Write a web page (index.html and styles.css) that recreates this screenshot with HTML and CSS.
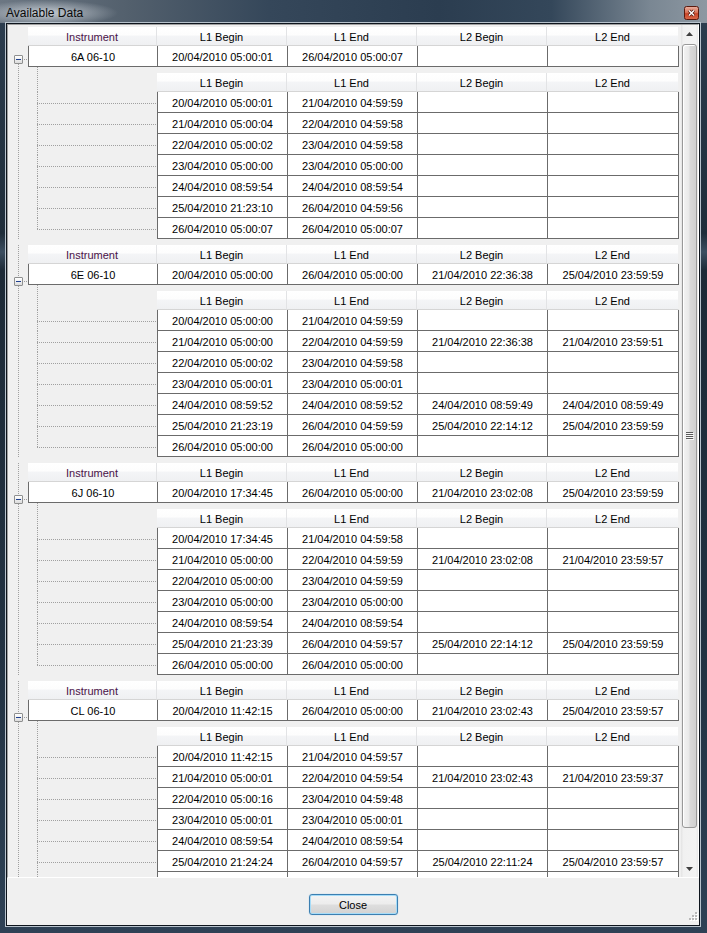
FILE: index.html
```html
<!DOCTYPE html>
<html lang="en">
<head>
  <meta charset="UTF-8" />
  <title>Available Data</title>
  <link rel="stylesheet" href="styles.css">
</head>
<body>
  <div class="window">
    <div class="titlebar">
      <span class="title">Available Data</span>
      <span class="title-close">
        <svg width="15" height="14" viewBox="0 0 15 14">
          <defs>
            <linearGradient id="closeGrad" x1="0" y1="0" x2="0" y2="1">
              <stop offset="0" stop-color="#eab1a2"/>
              <stop offset="0.45" stop-color="#d9765b"/>
              <stop offset="0.55" stop-color="#c8462a"/>
              <stop offset="1" stop-color="#d8694a"/>
            </linearGradient>
          </defs>
          <rect x="0.5" y="0.5" width="14" height="13" rx="2" fill="url(#closeGrad)" stroke="#5a1a0e"/>
          <path d="M5 4.5 L10 9.5 M10 4.5 L5 9.5" stroke="#4a140a" stroke-width="3"/>
          <path d="M5 4.5 L10 9.5 M10 4.5 L5 9.5" stroke="#ffffff" stroke-width="1.5"/>
        </svg>
      </span>
    </div>

    <div class="client">
      <div class="grid">
        <div class="rows">

          <!-- 6A 06-10 -->
          <div class="node node-first">
            <div class="gutter">
              <div class="gutter-top"></div>
              <div class="expander"><span class="expander-box"></span><span class="expander-tick"></span></div>
              <div class="gutter-line"></div>
            </div>
            <div class="node-body">
              <div class="head">
                <div class="head-cell head-instrument">Instrument</div>
                <div class="head-cell">L1 Begin</div>
                <div class="head-cell">L1 End</div>
                <div class="head-cell">L2 Begin</div>
                <div class="head-cell">L2 End</div>
              </div>
              <div class="row">
                <div class="cell cell-instrument">6A 06-10</div>
                <div class="cell">20/04/2010 05:00:01</div>
                <div class="cell">26/04/2010 05:00:07</div>
                <div class="cell"></div>
                <div class="cell"></div>
              </div>
              <div class="children">
                <div class="child-gutter">
                  <div class="child-gutter-top"></div>
                  <div class="branch"><div class="branch-h"></div></div>
                  <div class="branch"><div class="branch-h"></div></div>
                  <div class="branch"><div class="branch-h"></div></div>
                  <div class="branch"><div class="branch-h"></div></div>
                  <div class="branch"><div class="branch-h"></div></div>
                  <div class="branch"><div class="branch-h"></div></div>
                  <div class="branch branch-last"><div class="branch-h"></div></div>
                </div>
                <div class="child-table">
                  <div class="head">
                    <div class="head-cell">L1 Begin</div>
                    <div class="head-cell">L1 End</div>
                    <div class="head-cell">L2 Begin</div>
                    <div class="head-cell">L2 End</div>
                  </div>
                  <div class="row"><div class="cell">20/04/2010 05:00:01</div><div class="cell">21/04/2010 04:59:59</div><div class="cell"></div><div class="cell"></div></div>
                  <div class="row"><div class="cell">21/04/2010 05:00:04</div><div class="cell">22/04/2010 04:59:58</div><div class="cell"></div><div class="cell"></div></div>
                  <div class="row"><div class="cell">22/04/2010 05:00:02</div><div class="cell">23/04/2010 04:59:58</div><div class="cell"></div><div class="cell"></div></div>
                  <div class="row"><div class="cell">23/04/2010 05:00:00</div><div class="cell">23/04/2010 05:00:00</div><div class="cell"></div><div class="cell"></div></div>
                  <div class="row"><div class="cell">24/04/2010 08:59:54</div><div class="cell">24/04/2010 08:59:54</div><div class="cell"></div><div class="cell"></div></div>
                  <div class="row"><div class="cell">25/04/2010 21:23:10</div><div class="cell">26/04/2010 04:59:56</div><div class="cell"></div><div class="cell"></div></div>
                  <div class="row"><div class="cell">26/04/2010 05:00:07</div><div class="cell">26/04/2010 05:00:07</div><div class="cell"></div><div class="cell"></div></div>
                </div>
              </div>
            </div>
          </div>

          <!-- 6E 06-10 -->
          <div class="node">
            <div class="gutter">
              <div class="gutter-top"></div>
              <div class="expander"><span class="expander-box"></span><span class="expander-tick"></span></div>
              <div class="gutter-line"></div>
            </div>
            <div class="node-body">
              <div class="head">
                <div class="head-cell head-instrument">Instrument</div>
                <div class="head-cell">L1 Begin</div>
                <div class="head-cell">L1 End</div>
                <div class="head-cell">L2 Begin</div>
                <div class="head-cell">L2 End</div>
              </div>
              <div class="row">
                <div class="cell cell-instrument">6E 06-10</div>
                <div class="cell">20/04/2010 05:00:00</div>
                <div class="cell">26/04/2010 05:00:00</div>
                <div class="cell">21/04/2010 22:36:38</div>
                <div class="cell">25/04/2010 23:59:59</div>
              </div>
              <div class="children">
                <div class="child-gutter">
                  <div class="child-gutter-top"></div>
                  <div class="branch"><div class="branch-h"></div></div>
                  <div class="branch"><div class="branch-h"></div></div>
                  <div class="branch"><div class="branch-h"></div></div>
                  <div class="branch"><div class="branch-h"></div></div>
                  <div class="branch"><div class="branch-h"></div></div>
                  <div class="branch"><div class="branch-h"></div></div>
                  <div class="branch branch-last"><div class="branch-h"></div></div>
                </div>
                <div class="child-table">
                  <div class="head">
                    <div class="head-cell">L1 Begin</div>
                    <div class="head-cell">L1 End</div>
                    <div class="head-cell">L2 Begin</div>
                    <div class="head-cell">L2 End</div>
                  </div>
                  <div class="row"><div class="cell">20/04/2010 05:00:00</div><div class="cell">21/04/2010 04:59:59</div><div class="cell"></div><div class="cell"></div></div>
                  <div class="row"><div class="cell">21/04/2010 05:00:00</div><div class="cell">22/04/2010 04:59:59</div><div class="cell">21/04/2010 22:36:38</div><div class="cell">21/04/2010 23:59:51</div></div>
                  <div class="row"><div class="cell">22/04/2010 05:00:02</div><div class="cell">23/04/2010 04:59:58</div><div class="cell"></div><div class="cell"></div></div>
                  <div class="row"><div class="cell">23/04/2010 05:00:01</div><div class="cell">23/04/2010 05:00:01</div><div class="cell"></div><div class="cell"></div></div>
                  <div class="row"><div class="cell">24/04/2010 08:59:52</div><div class="cell">24/04/2010 08:59:52</div><div class="cell">24/04/2010 08:59:49</div><div class="cell">24/04/2010 08:59:49</div></div>
                  <div class="row"><div class="cell">25/04/2010 21:23:19</div><div class="cell">26/04/2010 04:59:59</div><div class="cell">25/04/2010 22:14:12</div><div class="cell">25/04/2010 23:59:59</div></div>
                  <div class="row"><div class="cell">26/04/2010 05:00:00</div><div class="cell">26/04/2010 05:00:00</div><div class="cell"></div><div class="cell"></div></div>
                </div>
              </div>
            </div>
          </div>

          <!-- 6J 06-10 -->
          <div class="node">
            <div class="gutter">
              <div class="gutter-top"></div>
              <div class="expander"><span class="expander-box"></span><span class="expander-tick"></span></div>
              <div class="gutter-line"></div>
            </div>
            <div class="node-body">
              <div class="head">
                <div class="head-cell head-instrument">Instrument</div>
                <div class="head-cell">L1 Begin</div>
                <div class="head-cell">L1 End</div>
                <div class="head-cell">L2 Begin</div>
                <div class="head-cell">L2 End</div>
              </div>
              <div class="row">
                <div class="cell cell-instrument">6J 06-10</div>
                <div class="cell">20/04/2010 17:34:45</div>
                <div class="cell">26/04/2010 05:00:00</div>
                <div class="cell">21/04/2010 23:02:08</div>
                <div class="cell">25/04/2010 23:59:59</div>
              </div>
              <div class="children">
                <div class="child-gutter">
                  <div class="child-gutter-top"></div>
                  <div class="branch"><div class="branch-h"></div></div>
                  <div class="branch"><div class="branch-h"></div></div>
                  <div class="branch"><div class="branch-h"></div></div>
                  <div class="branch"><div class="branch-h"></div></div>
                  <div class="branch"><div class="branch-h"></div></div>
                  <div class="branch"><div class="branch-h"></div></div>
                  <div class="branch branch-last"><div class="branch-h"></div></div>
                </div>
                <div class="child-table">
                  <div class="head">
                    <div class="head-cell">L1 Begin</div>
                    <div class="head-cell">L1 End</div>
                    <div class="head-cell">L2 Begin</div>
                    <div class="head-cell">L2 End</div>
                  </div>
                  <div class="row"><div class="cell">20/04/2010 17:34:45</div><div class="cell">21/04/2010 04:59:58</div><div class="cell"></div><div class="cell"></div></div>
                  <div class="row"><div class="cell">21/04/2010 05:00:00</div><div class="cell">22/04/2010 04:59:59</div><div class="cell">21/04/2010 23:02:08</div><div class="cell">21/04/2010 23:59:57</div></div>
                  <div class="row"><div class="cell">22/04/2010 05:00:00</div><div class="cell">23/04/2010 04:59:59</div><div class="cell"></div><div class="cell"></div></div>
                  <div class="row"><div class="cell">23/04/2010 05:00:00</div><div class="cell">23/04/2010 05:00:00</div><div class="cell"></div><div class="cell"></div></div>
                  <div class="row"><div class="cell">24/04/2010 08:59:54</div><div class="cell">24/04/2010 08:59:54</div><div class="cell"></div><div class="cell"></div></div>
                  <div class="row"><div class="cell">25/04/2010 21:23:39</div><div class="cell">26/04/2010 04:59:57</div><div class="cell">25/04/2010 22:14:12</div><div class="cell">25/04/2010 23:59:59</div></div>
                  <div class="row"><div class="cell">26/04/2010 05:00:00</div><div class="cell">26/04/2010 05:00:00</div><div class="cell"></div><div class="cell"></div></div>
                </div>
              </div>
            </div>
          </div>

          <!-- CL 06-10 -->
          <div class="node">
            <div class="gutter">
              <div class="gutter-top"></div>
              <div class="expander"><span class="expander-box"></span><span class="expander-tick"></span></div>
              <div class="gutter-line"></div>
            </div>
            <div class="node-body">
              <div class="head">
                <div class="head-cell head-instrument">Instrument</div>
                <div class="head-cell">L1 Begin</div>
                <div class="head-cell">L1 End</div>
                <div class="head-cell">L2 Begin</div>
                <div class="head-cell">L2 End</div>
              </div>
              <div class="row">
                <div class="cell cell-instrument">CL 06-10</div>
                <div class="cell">20/04/2010 11:42:15</div>
                <div class="cell">26/04/2010 05:00:00</div>
                <div class="cell">21/04/2010 23:02:43</div>
                <div class="cell">25/04/2010 23:59:57</div>
              </div>
              <div class="children">
                <div class="child-gutter">
                  <div class="child-gutter-top"></div>
                  <div class="branch"><div class="branch-h"></div></div>
                  <div class="branch"><div class="branch-h"></div></div>
                  <div class="branch"><div class="branch-h"></div></div>
                  <div class="branch"><div class="branch-h"></div></div>
                  <div class="branch"><div class="branch-h"></div></div>
                  <div class="branch"><div class="branch-h"></div></div>
                  <div class="branch branch-last"><div class="branch-h"></div></div>
                </div>
                <div class="child-table">
                  <div class="head">
                    <div class="head-cell">L1 Begin</div>
                    <div class="head-cell">L1 End</div>
                    <div class="head-cell">L2 Begin</div>
                    <div class="head-cell">L2 End</div>
                  </div>
                  <div class="row"><div class="cell">20/04/2010 11:42:15</div><div class="cell">21/04/2010 04:59:57</div><div class="cell"></div><div class="cell"></div></div>
                  <div class="row"><div class="cell">21/04/2010 05:00:01</div><div class="cell">22/04/2010 04:59:54</div><div class="cell">21/04/2010 23:02:43</div><div class="cell">21/04/2010 23:59:37</div></div>
                  <div class="row"><div class="cell">22/04/2010 05:00:16</div><div class="cell">23/04/2010 04:59:48</div><div class="cell"></div><div class="cell"></div></div>
                  <div class="row"><div class="cell">23/04/2010 05:00:01</div><div class="cell">23/04/2010 05:00:01</div><div class="cell"></div><div class="cell"></div></div>
                  <div class="row"><div class="cell">24/04/2010 08:59:54</div><div class="cell">24/04/2010 08:59:54</div><div class="cell"></div><div class="cell"></div></div>
                  <div class="row"><div class="cell">25/04/2010 21:24:24</div><div class="cell">26/04/2010 04:59:57</div><div class="cell">25/04/2010 22:11:24</div><div class="cell">25/04/2010 23:59:57</div></div>
                  <div class="row"><div class="cell"></div><div class="cell"></div><div class="cell"></div><div class="cell"></div></div>
                </div>
              </div>
            </div>
          </div>

        </div>

        <div class="scrollbar">
          <div class="sb-btn">
            <svg width="7" height="4" viewBox="0 0 7 4"><path d="M3.5 0 L7 4 L0 4 Z" fill="#404040"/></svg>
          </div>
          <div class="sb-thumb">
            <svg width="8" height="8" viewBox="0 0 8 8">
              <path d="M0 0.5 H7 M0 2.5 H7 M0 4.5 H7 M0 6.5 H7" stroke="#5a5a5a"/>
              <path d="M1 1.5 H8 M1 3.5 H8 M1 5.5 H8 M1 7.5 H8" stroke="#f8f8f8"/>
            </svg>
          </div>
          <div class="sb-track"></div>
          <div class="sb-btn">
            <svg width="7" height="4" viewBox="0 0 7 4"><path d="M0 0 L7 0 L3.5 4 Z" fill="#404040"/></svg>
          </div>
        </div>
      </div>

      <div class="footer">
        <button class="close-btn">Close</button>
        <svg class="size-grip" width="11" height="11" viewBox="0 0 11 11">
          <g fill="#ffffff">
            <rect x="9" y="1" width="2" height="2"/><rect x="6" y="4" width="2" height="2"/><rect x="9" y="4" width="2" height="2"/>
            <rect x="3" y="7" width="2" height="2"/><rect x="6" y="7" width="2" height="2"/><rect x="9" y="7" width="2" height="2"/>
          </g>
          <g fill="#b8b8b8">
            <rect x="8" y="0" width="2" height="2"/><rect x="5" y="3" width="2" height="2"/><rect x="8" y="3" width="2" height="2"/>
            <rect x="2" y="6" width="2" height="2"/><rect x="5" y="6" width="2" height="2"/><rect x="8" y="6" width="2" height="2"/>
          </g>
        </svg>
      </div>
    </div>
  </div>
</body>
</html>
```

FILE: styles.css
```css
* {
  box-sizing: border-box;
}
body {
  margin: 0;
  font-family: "Liberation Sans", Arial, sans-serif;
  font-size: 11px;
  color: #000;
  background: #22313f;
}
.window {
  width: 707px;
  height: 933px;
  display: flex;
  flex-direction: column;
  background: linear-gradient(to bottom, #2d3e50 0, #1f2d3a 25%, #3c4e60 27%, #1d2a37 29%, #223242 70%, #2e4155 100%);
}

/* title bar */
.titlebar {
  height: 23px;
  display: flex;
  justify-content: space-between;
  padding: 0 8px 0 6px;
  background:
    radial-gradient(ellipse 72px 13px at 46px 13px, rgba(214, 220, 226, 0.85), rgba(214, 220, 226, 0) 100%),
    linear-gradient(to right, #6c7783 0, #53606d 18%, #35475a 38%, #2b3d50 62%, #34475a 78%, #7a8793 92%, #8d98a2 100%);
}
.title {
  font-size: 12px;
  line-height: 23px;
  padding-top: 2px;
  color: #0a0a0a;
}
.title-close {
  margin-top: 6px;
  height: 14px;
}

/* client area */
.client {
  margin: 0 7px 0 6px;
  height: 903px;
  border: 1px solid #0d141c;
  box-shadow: 0 0 0 1px #b7c2cc;
  background: #f0f0f0;
  display: flex;
  flex-direction: column;
}

/* data grid */
.grid {
  height: 854px;
  display: flex;
  border-top: 1px solid #a0a0a0;
  border-left: 1px solid #a0a0a0;
  border-right: 1px solid #ffffff;
  border-bottom: 1px solid #ffffff;
  background: #f0f0f0;
  overflow: hidden;
}
.rows {
  flex: 1;
  overflow: hidden;
}
.node {
  display: flex;
  padding-top: 6px;
}
.node-first {
  padding-top: 2px;
}

/* tree lines */
.gutter {
  width: 20px;
  display: flex;
  flex-direction: column;
}
.gutter-top,
.gutter-line {
  background: repeating-linear-gradient(to bottom, #a0a0a0 0 1px, transparent 1px 2px) 10px 0 / 1px 100% no-repeat;
}
.gutter-top {
  height: 32px;
}
.node-first .gutter-top {
  height: 28px;
  background: none;
}
.gutter-line {
  flex: 1;
}
.expander {
  height: 9px;
  display: flex;
}
.expander-box {
  width: 9px;
  height: 9px;
  margin-left: 6px;
  border: 1px solid #8e8f8f;
  border-radius: 1px;
  background: linear-gradient(to bottom, #ffffff, #dcdcdc);
  display: flex;
  align-items: center;
  justify-content: center;
}
.expander-box::before {
  content: "";
  width: 5px;
  height: 1px;
  background: #1e3f8f;
}
.expander-tick {
  width: 5px;
  height: 1px;
  margin-top: 4px;
  background: repeating-linear-gradient(to right, transparent 0 1px, #a0a0a0 1px 2px);
}
.children {
  display: flex;
}
.child-gutter {
  width: 129px;
  display: flex;
  flex-direction: column;
}
.child-gutter-top {
  height: 25px;
  background: repeating-linear-gradient(to bottom, #a0a0a0 0 1px, transparent 1px 2px) 9px 0 / 1px 100% no-repeat;
}
.branch {
  height: 21px;
  margin-left: 9px;
  padding-top: 11px;
  background: repeating-linear-gradient(to bottom, #a0a0a0 0 1px, transparent 1px 2px) 0 0 / 1px 100% no-repeat;
}
.branch-last {
  background-size: 1px 12px;
}
.branch-h {
  height: 1px;
  background: repeating-linear-gradient(to right, #a0a0a0 0 1px, transparent 1px 2px);
}

/* tables */
.node-body {
  width: 651px;
}
.child-table {
  width: 522px;
  padding-top: 6px;
}
.head {
  display: flex;
  height: 19px;
}
.head-cell {
  width: 130px;
  line-height: 20px;
  text-align: center;
  border-right: 1px solid #e2e3e5;
  border-bottom: 1px solid #d5d5d5;
  background: linear-gradient(to bottom, #ffffff 0, #fdfdfd 45%, #f4f5f7 50%, #eff0f2 100%);
}
.head-cell:last-child {
  width: 132px;
  border-right-color: #f0f0f0;
}
.head-instrument {
  width: 129px;
  color: #4a1248;
}
.row {
  display: flex;
  height: 21px;
}
.cell {
  width: 130px;
  line-height: 22px;
  text-align: center;
  white-space: nowrap;
  background: #ffffff;
  border-left: 1px solid #6b6b6b;
  border-bottom: 1px solid #6b6b6b;
}
.cell:last-child {
  width: 132px;
  border-right: 1px solid #6b6b6b;
}
.cell-instrument {
  width: 129px;
}

/* scrollbar */
.scrollbar {
  width: 17px;
  display: flex;
  flex-direction: column;
  background: linear-gradient(to right, #e4e4e4 0, #f1f1f1 15%, #f3f3f3 85%, #e9e9e9 100%);
}
.sb-btn {
  height: 17px;
  display: flex;
  align-items: center;
  justify-content: center;
}
.sb-thumb {
  height: 784px;
  margin: 2px 1px 0;
  border: 1px solid #999999;
  border-radius: 3px;
  background: linear-gradient(to right, #f3f3f3 0, #e9e9e9 45%, #d9d9d9 55%, #d0d0d0 100%);
  box-shadow: inset 1px 1px 0 #ffffff;
  display: flex;
  align-items: center;
  justify-content: center;
}
.sb-track {
  flex: 1;
}

/* bottom panel */
.footer {
  flex: 1;
  position: relative;
  display: flex;
  justify-content: center;
  padding-top: 16px;
}
.close-btn {
  width: 89px;
  height: 21px;
  padding: 0;
  font-family: "Liberation Sans", Arial, sans-serif;
  font-size: 11px;
  color: #000;
  border: 1px solid #3c7fb1;
  border-radius: 3px;
  background: linear-gradient(to bottom, #f4f4f4 0, #ececec 48%, #dedede 52%, #d2d2d2 100%);
  box-shadow: inset 0 0 0 1px #a6dcf8, 0 0 1px #6fb8e8;
}
.size-grip {
  position: absolute;
  right: 1px;
  bottom: 2px;
}
```
